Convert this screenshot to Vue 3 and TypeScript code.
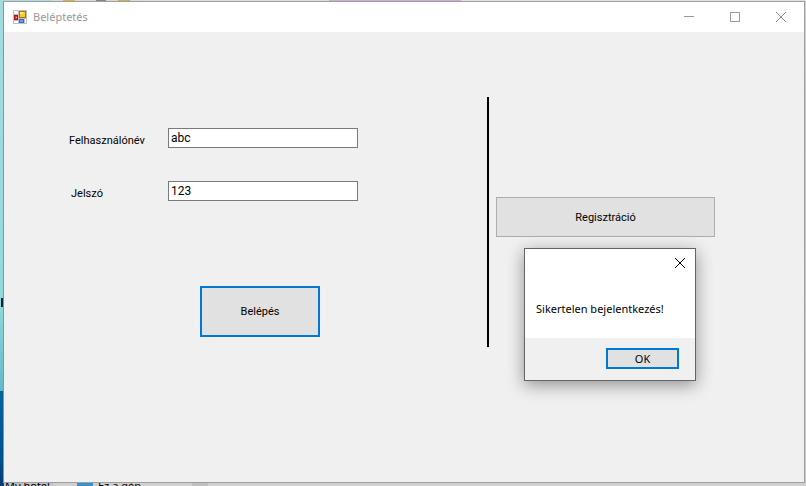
<script setup lang="ts">
import { ref } from 'vue'

const username = ref<string>('abc')
const secret = ref<string>('123')
const dialogOpen = ref<boolean>(true)

function submit(): void {
  dialogOpen.value = true
}
</script>

<template>
  <div class="desktop">
    <div class="edge-top" aria-hidden="true">
      <span class="top-teal"></span>
      <span class="top-gray"></span>
      <span class="top-gold"></span>
      <span class="top-space"></span>
      <span class="top-dark"></span>
      <span class="top-gap"></span>
      <span class="top-olive"></span>
      <span class="top-wide"></span>
      <span class="top-violet"></span>
      <span class="top-rest"></span>
    </div>

    <div class="edge-left" aria-hidden="true"><span class="left-mark"></span></div>

    <main class="window">
      <header class="titlebar">
        <svg class="app-icon" width="14" height="14" viewBox="0 0 14 14" shape-rendering="crispEdges" aria-hidden="true">
          <rect width="14" height="14" fill="#c0c0c0" />
          <path fill="#fff" d="M1 1h4v3H1zM1 11h4v2H1zM12 9h1v4h-1z" />
          <rect x="6" y="1" width="7" height="7" fill="#a87800" />
          <rect x="7" y="2" width="5" height="5" fill="#ffc928" />
          <rect x="7" y="2" width="3" height="2" fill="#ffe58a" />
          <rect x="1" y="5" width="4" height="5" fill="#b01010" />
          <rect x="2" y="6" width="2" height="3" fill="#e03a28" />
          <rect x="3" y="7" width="1" height="1" fill="#ffb0a0" />
          <rect x="6" y="9" width="5" height="4" fill="#3468c8" />
          <rect x="7" y="10" width="3" height="2" fill="#6c9cf0" />
        </svg>
        <h1 class="title">Beléptetés</h1>
        <div class="window-controls">
          <button type="button" class="control" aria-label="Kis méret">
            <svg width="10" height="10" viewBox="0 0 10 10"><path d="M0 4.5h10" fill="none" stroke="#999" /></svg>
          </button>
          <button type="button" class="control" aria-label="Teljes méret">
            <svg width="10" height="10" viewBox="0 0 10 10"><path d="M.5.5h9v9h-9z" fill="none" stroke="#999" /></svg>
          </button>
          <button type="button" class="control" aria-label="Bezárás">
            <svg width="10" height="10" viewBox="0 0 10 10"><path d="M0 0l10 10M10 0L0 10" fill="none" stroke="#8c8c8c" /></svg>
          </button>
        </div>
      </header>

      <div class="client">
        <form class="login" @submit.prevent="submit">
          <div class="fields">
            <label for="username">Felhasználónév</label>
            <input id="username" v-model="username" type="text" autocomplete="off" />
            <label for="secret" class="indented">Jelszó</label>
            <input id="secret" v-model="secret" type="text" autocomplete="off" />
          </div>
          <button type="submit" class="btn btn-login">Belépés</button>
        </form>
        <div class="divider"></div>
        <section class="register">
          <button type="button" class="btn btn-register">Regisztráció</button>
        </section>
      </div>

      <div v-if="dialogOpen" class="dialog" role="alertdialog" aria-labelledby="message">
        <div class="dialog-top">
          <button type="button" class="dialog-close" aria-label="Bezárás" @click="dialogOpen = false">
            <svg width="10" height="10" viewBox="0 0 10 10"><path d="M0 0l10 10M10 0L0 10" fill="none" stroke="#000" /></svg>
          </button>
        </div>
        <p id="message" class="message">Sikertelen bejelentkezés!</p>
        <div class="dialog-footer">
          <button type="button" class="btn btn-ok" @click="dialogOpen = false">OK</button>
        </div>
      </div>
    </main>

    <div class="edge-right" aria-hidden="true"></div>

    <div class="edge-bottom" aria-hidden="true">
      <span class="bottom-hotel">My hotel</span>
      <span class="bottom-drive"></span>
      <span class="bottom-pc">Ez a gép</span>
      <span class="bottom-scroll"></span>
    </div>
  </div>
</template>

<style>
body {
  background: #d6d6d6;
}
</style>

<style scoped>
.desktop {
  display: grid;
  grid-template-columns: 3px minmax(0, 1fr) 1px;
  grid-template-rows: 1px minmax(0, 1fr) 3px;
  min-height: 100vh;
  font-family: Roboto, "Liberation Sans", sans-serif;
  font-size: 11px;
  color: #000;
}

.edge-top {
  grid-column: 1 / -1;
  display: flex;
}

.top-teal { width: 52px; background: #a5dcdf; }
.top-gray { width: 11px; background: #d9d9d9; }
.top-gold { width: 12px; background: #d8b840; }
.top-space { width: 21px; background: #d9d9d9; }
.top-dark { width: 10px; background: #858585; }
.top-gap { width: 12px; background: #d9d9d9; }
.top-olive { width: 12px; background: #c6b25c; }
.top-wide { width: 199px; background: #dcdcdc; }
.top-violet { width: 132px; background: #cdaedb; }
.top-rest { flex: 1; background: #dfdfdf; }

.edge-left {
  display: flex;
  flex-direction: column;
  justify-content: center;
  align-items: flex-end;
  padding-top: 120px;
  background: linear-gradient(#a3dce0, #92d9dc 62%, #62b9c8 81%, #00649c 81%, #00508f 95%, #063f72);
}

.left-mark {
  width: 2px;
  height: 9px;
  background: #10204c;
}

.edge-right {
  background: linear-gradient(#d2d2d2, #c2c2c2 20%, #c6c6c6);
}

.edge-bottom {
  grid-column: 1 / -1;
  display: flex;
  height: 3px;
  overflow: hidden;
  background: #cfcfcf;
  font-family: "Noto Sans", sans-serif;
  font-size: 11px;
  line-height: 6px;
  white-space: nowrap;
}

.bottom-hotel {
  width: 53px;
  padding-left: 5px;
  box-sizing: border-box;
  background: linear-gradient(90deg, #063f72 8%, #c3c3c3 8%);
}

.bottom-drive {
  width: 16px;
  margin-left: 24px;
  background: #3590cc;
}

.bottom-pc {
  margin-left: 5px;
}

.bottom-scroll {
  width: 16px;
  margin-left: 51px;
  background: #bfbfbf;
}

.window {
  position: relative;
  display: flex;
  flex-direction: column;
  border: 1px solid #a0a0a0;
  border-left-color: #7b9c9e;
  background: #f0f0f0;
}

.titlebar {
  display: flex;
  align-items: center;
  height: 30px;
  padding-left: 9px;
  background: #fff;
}

.title {
  margin: 0 0 0 6px;
  font: 400 11px/16px "Noto Sans", sans-serif;
  color: #999;
}

.window-controls {
  display: flex;
  align-self: stretch;
  margin-left: auto;
}

.control,
.dialog-close {
  display: flex;
  align-items: center;
  justify-content: center;
  width: 46px;
  padding: 0;
  border: 0;
  background: transparent;
}

.client {
  flex: 1;
  display: grid;
  grid-template-columns: minmax(0, 483fr) 2px minmax(0, 315fr);
  align-items: start;
}

.login {
  padding: 96px 0 0 65px;
}

.fields {
  display: grid;
  grid-template-columns: 99px 190px;
  row-gap: 33px;
}

.fields label {
  padding-top: 6px;
  line-height: 14px;
}

.fields .indented {
  padding-left: 2px;
}

.fields input {
  box-sizing: border-box;
  width: 100%;
  height: 20px;
  padding: 0 2px;
  border: 1px solid #7a7a7a;
  border-radius: 0;
  outline: none;
  background: #fff;
  font: inherit;
  font-size: 12px;
  color: inherit;
}

.btn {
  box-sizing: border-box;
  padding: 0;
  border: 2px solid #0078d7;
  border-radius: 0;
  background: #e1e1e1;
  font: inherit;
  color: inherit;
}

.btn-login {
  display: block;
  width: 120px;
  height: 51px;
  margin: 85px 0 0 131px;
}

.divider {
  height: 250px;
  margin-top: 65px;
  background: #000;
}

.register {
  padding: 165px 0 0 7px;
}

.btn-register {
  width: 219px;
  height: 40px;
  border: 1px solid #adadad;
}

.dialog {
  position: absolute;
  top: 246px;
  right: 108px;
  box-sizing: border-box;
  width: 172px;
  border: 1px solid #646464;
  background: #fff;
  box-shadow: 0 4px 16px rgba(0, 0, 0, 0.4);
  font-family: "Noto Sans", sans-serif;
}

.dialog-top {
  display: flex;
  justify-content: flex-end;
  height: 28px;
}

.dialog-close {
  width: 30px;
}

.message {
  margin: 0;
  padding: 24px 11px 21px;
  line-height: 16px;
  white-space: nowrap;
}

.dialog-footer {
  display: flex;
  justify-content: flex-end;
  padding: 10px 16px 11px;
  background: #f0f0f0;
}

.btn-ok {
  width: 73px;
  height: 21px;
}
</style>
